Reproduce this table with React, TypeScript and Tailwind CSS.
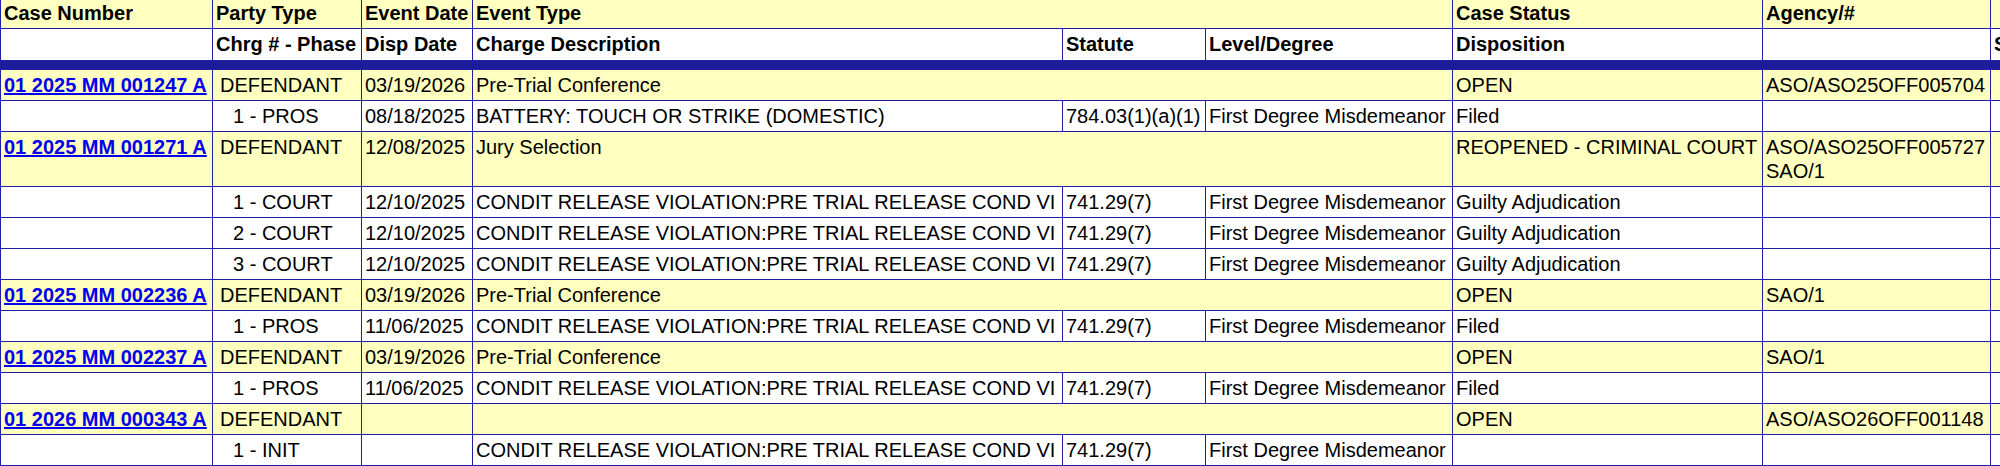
import React from 'react';

type CaseRow = {
  kind: 'case';
  caseNumber: string;
  party: string;
  eventDate: string;
  eventType: string;
  status: string;
  agency: string[];
};

type ChargeRow = {
  kind: 'charge';
  phase: string;
  dispDate: string;
  description: string;
  statute: string;
  level: string;
  disposition: string;
};

const CRV = 'CONDIT RELEASE VIOLATION:PRE TRIAL RELEASE COND VI';

const rows: (CaseRow | ChargeRow)[] = [
  { kind: 'case', caseNumber: '01 2025 MM 001247 A', party: 'DEFENDANT', eventDate: '03/19/2026', eventType: 'Pre-Trial Conference', status: 'OPEN', agency: ['ASO/ASO25OFF005704'] },
  { kind: 'charge', phase: '1 - PROS', dispDate: '08/18/2025', description: 'BATTERY: TOUCH OR STRIKE (DOMESTIC)', statute: '784.03(1)(a)(1)', level: 'First Degree Misdemeanor', disposition: 'Filed' },
  { kind: 'case', caseNumber: '01 2025 MM 001271 A', party: 'DEFENDANT', eventDate: '12/08/2025', eventType: 'Jury Selection', status: 'REOPENED - CRIMINAL COURT', agency: ['ASO/ASO25OFF005727', 'SAO/1'] },
  { kind: 'charge', phase: '1 - COURT', dispDate: '12/10/2025', description: CRV, statute: '741.29(7)', level: 'First Degree Misdemeanor', disposition: 'Guilty Adjudication' },
  { kind: 'charge', phase: '2 - COURT', dispDate: '12/10/2025', description: CRV, statute: '741.29(7)', level: 'First Degree Misdemeanor', disposition: 'Guilty Adjudication' },
  { kind: 'charge', phase: '3 - COURT', dispDate: '12/10/2025', description: CRV, statute: '741.29(7)', level: 'First Degree Misdemeanor', disposition: 'Guilty Adjudication' },
  { kind: 'case', caseNumber: '01 2025 MM 002236 A', party: 'DEFENDANT', eventDate: '03/19/2026', eventType: 'Pre-Trial Conference', status: 'OPEN', agency: ['SAO/1'] },
  { kind: 'charge', phase: '1 - PROS', dispDate: '11/06/2025', description: CRV, statute: '741.29(7)', level: 'First Degree Misdemeanor', disposition: 'Filed' },
  { kind: 'case', caseNumber: '01 2025 MM 002237 A', party: 'DEFENDANT', eventDate: '03/19/2026', eventType: 'Pre-Trial Conference', status: 'OPEN', agency: ['SAO/1'] },
  { kind: 'charge', phase: '1 - PROS', dispDate: '11/06/2025', description: CRV, statute: '741.29(7)', level: 'First Degree Misdemeanor', disposition: 'Filed' },
  { kind: 'case', caseNumber: '01 2026 MM 000343 A', party: 'DEFENDANT', eventDate: '', eventType: '', status: 'OPEN', agency: ['ASO/ASO26OFF001148'] },
  { kind: 'charge', phase: '1 - INIT', dispDate: '', description: CRV, statute: '741.29(7)', level: 'First Degree Misdemeanor', disposition: '' },
];

// shared cell look: thin navy rules, tight padding
const td = 'border border-[#1f1fa6] px-[3px] py-[3px] align-top whitespace-nowrap overflow-hidden';

const App = () => {
  return (
    <div className="w-[2000px] h-[466px] overflow-hidden bg-white">
      <table className="-mt-[3px] table-fixed border-collapse w-[2110px] font-['Liberation_Sans',Arial,sans-serif] text-[20px] leading-[24px] text-black">
        <colgroup>
          <col className="w-[212px]" />
          <col className="w-[149px]" />
          <col className="w-[111px]" />
          <col className="w-[590px]" />
          <col className="w-[143px]" />
          <col className="w-[247px]" />
          <col className="w-[310px]" />
          <col className="w-[228px]" />
          <col className="w-[120px]" />
        </colgroup>
        <thead>
          <tr className="bg-[#ffffc0] font-bold">
            <td className={td}>Case Number</td>
            <td className={td}>Party Type</td>
            <td className={td}>Event Date</td>
            <td className={td} colSpan={3}>Event Type</td>
            <td className={td}>Case Status</td>
            <td className={td}>Agency/#</td>
            <td className={td}></td>
          </tr>
          <tr className="bg-white font-bold">
            <td className={`${td} pb-[4px]`}></td>
            <td className={`${td} pb-[4px]`}>Chrg # - Phase</td>
            <td className={`${td} pb-[4px]`}>Disp Date</td>
            <td className={`${td} pb-[4px]`}>Charge Description</td>
            <td className={`${td} pb-[4px]`}>Statute</td>
            <td className={`${td} pb-[4px]`}>Level/Degree</td>
            <td className={`${td} pb-[4px]`}>Disposition</td>
            <td className={`${td} pb-[4px]`}></td>
            <td className={`${td} pb-[4px]`}>Sentence</td>
          </tr>
          <tr>
            <td colSpan={9} className="border border-[#1f1fa6] bg-[#1c1c9a] p-0 h-[9px]"></td>
          </tr>
        </thead>
        <tbody>
          {rows.map((r, i) =>
            r.kind === 'case' ? (
              <tr key={i} className="bg-[#ffffc0]">
                <td className={td}>
                  <a href="#" className="font-bold text-[#0000ee] underline">
                    {r.caseNumber}
                  </a>
                </td>
                <td className={`${td} pl-[7px]`}>{r.party}</td>
                <td className={td}>{r.eventDate}</td>
                <td className={td} colSpan={3}>{r.eventType}</td>
                <td className={td}>{r.status}</td>
                <td className={td}>
                  {r.agency.map((a) => (
                    <div key={a}>{a}</div>
                  ))}
                </td>
                <td className={td}></td>
              </tr>
            ) : (
              <tr key={i} className="bg-white">
                <td className={td}></td>
                <td className={`${td} pl-[20px]`}>{r.phase}</td>
                <td className={td}>{r.dispDate}</td>
                <td className={td}>{r.description}</td>
                <td className={td}>{r.statute}</td>
                <td className={td}>{r.level}</td>
                <td className={td}>{r.disposition}</td>
                <td className={td}></td>
                <td className={td}></td>
              </tr>
            )
          )}
        </tbody>
      </table>
    </div>
  );
};

export default App;
